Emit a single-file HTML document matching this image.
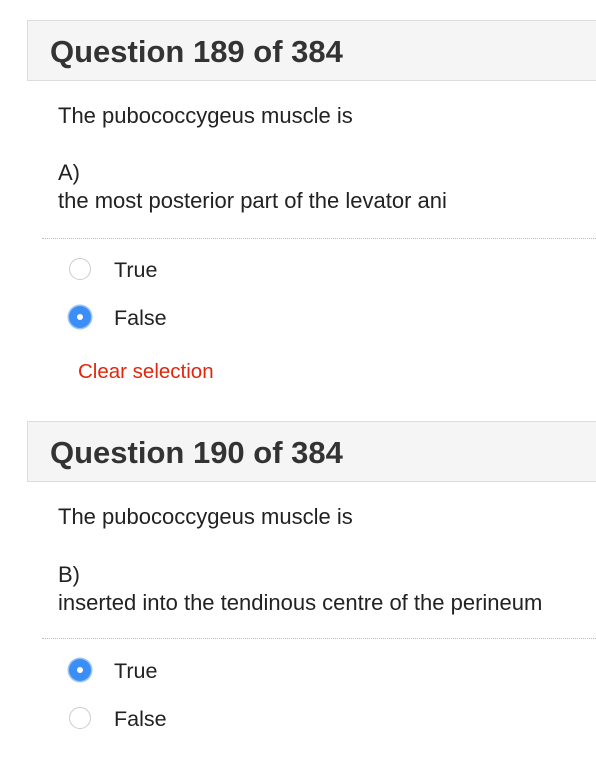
<!DOCTYPE html>
<html><head><meta charset="utf-8"><style>
body{margin:0;width:596px;height:762px;background:#fff;font-family:"Liberation Sans",Arial,sans-serif;color:#222;position:relative;overflow:hidden}
.h{position:absolute;left:27px;width:580px;height:61px;background:#f5f5f5;border:1px solid #dcdcdc;box-sizing:border-box}
.h span{position:absolute;left:22px;top:13px;font-size:31px;font-weight:bold;color:#333}
.t{position:absolute;left:58px;font-size:22px;line-height:28px;white-space:nowrap}
.d{position:absolute;left:42px;width:560px;border-top:1px dotted #bbb}
.r{position:absolute;left:69px;width:22px;height:22px;border-radius:50%;box-sizing:border-box;border:1.5px solid #ccc;background:#fff}
.r.on{border:none;background:#3a8ef6;box-shadow:0 0 0 1.5px #9cc4f8}
.r.on::after{content:"";position:absolute;left:8px;top:8px;width:6px;height:6px;border-radius:50%;background:#fff}
.l{position:absolute;left:114px;font-size:21.5px;line-height:24px}
.c{position:absolute;left:78px;font-size:20.5px;color:#e0270c;line-height:24px}
</style></head><body>
<div class="h" style="top:20px"><span>Question 189 of 384</span></div>
<div class="t" style="top:102px">The pubococcygeus muscle is</div>
<div class="t" style="top:159px">A)</div>
<div class="t" style="top:187px">the most posterior part of the levator ani</div>
<div class="d" style="top:238px"></div>
<div class="r" style="top:258px"></div><div class="l" style="top:258px">True</div>
<div class="r on" style="top:306px"></div><div class="l" style="top:306px">False</div>
<div class="c" style="top:360px">Clear selection</div>

<div class="h" style="top:421px"><span>Question 190 of 384</span></div>
<div class="t" style="top:503px">The pubococcygeus muscle is</div>
<div class="t" style="top:561px">B)</div>
<div class="t" style="top:589px">inserted into the tendinous centre of the perineum</div>
<div class="d" style="top:638px"></div>
<div class="r on" style="top:659px"></div><div class="l" style="top:659px">True</div>
<div class="r" style="top:707px"></div><div class="l" style="top:707px">False</div>
</body></html>
